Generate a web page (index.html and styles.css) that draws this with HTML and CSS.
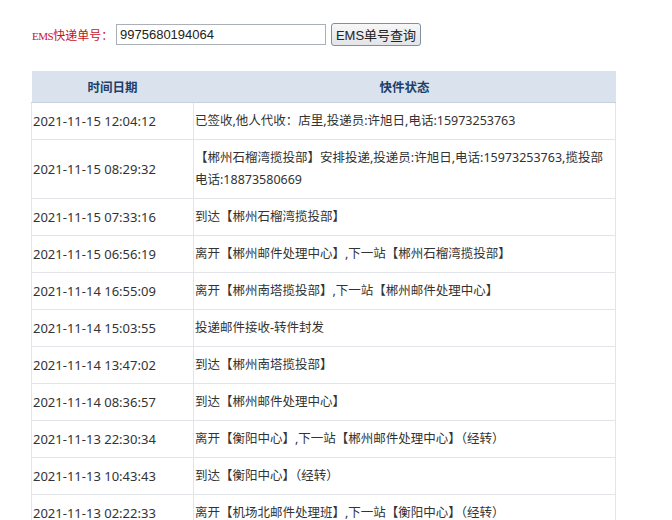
FILE: index.html
```html
<!DOCTYPE html>
<html lang="zh">
<head>
<meta charset="utf-8">
<link rel="stylesheet" href="styles.css">
</head>
<body>
<div class="page">
  <form class="search">
    <label class="label"><span class="ems">EMS</span>快递单号：</label>
    <input class="num" type="text" value="9975680194064">
    <button class="btn" type="button">EMS单号查询</button>
  </form>
  <table class="track">
    <thead>
      <tr><th class="c1">时间日期</th><th class="c2">快件状态</th></tr>
    </thead>
    <tbody>
      <tr><td class="t">2021-11-15 12:04:12</td><td class="s">已签收,他人代收：店里,投递员:许旭日,电话:15973253763</td></tr>
      <tr><td class="t">2021-11-15 08:29:32</td><td class="s">【郴州石榴湾揽投部】安排投递,投递员:许旭日,电话:15973253763,揽投部<br>电话:18873580669</td></tr>
      <tr><td class="t">2021-11-15 07:33:16</td><td class="s">到达【郴州石榴湾揽投部】</td></tr>
      <tr><td class="t">2021-11-15 06:56:19</td><td class="s">离开【郴州邮件处理中心】,下一站【郴州石榴湾揽投部】</td></tr>
      <tr><td class="t">2021-11-14 16:55:09</td><td class="s">离开【郴州南塔揽投部】,下一站【郴州邮件处理中心】</td></tr>
      <tr><td class="t">2021-11-14 15:03:55</td><td class="s">投递邮件接收-转件封发</td></tr>
      <tr><td class="t">2021-11-14 13:47:02</td><td class="s">到达【郴州南塔揽投部】</td></tr>
      <tr><td class="t">2021-11-14 08:36:57</td><td class="s">到达【郴州邮件处理中心】</td></tr>
      <tr><td class="t">2021-11-13 22:30:34</td><td class="s">离开【衡阳中心】,下一站【郴州邮件处理中心】（经转）</td></tr>
      <tr><td class="t">2021-11-13 10:43:43</td><td class="s">到达【衡阳中心】（经转）</td></tr>
      <tr><td class="t">2021-11-13 02:22:33</td><td class="s">离开【机场北邮件处理班】,下一站【衡阳中心】（经转）</td></tr>
    </tbody>
  </table>
</div>
</body>
</html>
```

FILE: styles.css
```css
html, body { margin: 0; padding: 0; background: #fff; }
body {
  font-family: "Noto Sans", "Noto Sans CJK SC", sans-serif;
  color: #333;
}
.page { padding: 23px 0 0 31px; }
.search {
  display: flex;
  align-items: center;
  height: 23px;
  margin: 0;
}
.label {
  color: #c8141e;
  font-size: 12px;
  width: 84px;
  padding-left: 1px;
}
.ems { font-family: "Liberation Serif", serif; font-size: 11px; letter-spacing: -0.5px; }
.num {
  box-sizing: border-box;
  width: 210px;
  height: 21px;
  border: 1px solid #a9b0b8;
  padding: 0 3px;
  font-family: "Liberation Sans", sans-serif;
  font-size: 13px;
  color: #222;
  margin: 0;
}
.btn {
  box-sizing: border-box;
  margin-left: 5px;
  width: 90px;
  height: 23px;
  border: 1px solid #7f8fa8;
  border-radius: 3px;
  background: linear-gradient(#f7f7f7, #e2e4e8);
  font-family: "Liberation Sans", "Noto Sans CJK SC", sans-serif;
  font-size: 13px;
  color: #222;
  padding: 0;
}
.track {
  margin-top: 25px;
  width: 585px;
  border-collapse: collapse;
}
.track th {
  background: #dae3ed;
  color: #1e3f6a;
  font-weight: bold;
  font-size: 12.5px;
  height: 31px;
  padding: 0;
  border-bottom: 1px solid #c6d2e0;
  text-align: center;
}
.track .c1 { width: 162px; }
.track td {
  border: 1px solid #e1e5ea;
  padding: 7px 2px 7px 1px;
  line-height: 22px;
  vertical-align: middle;
}
.track .t { font-size: 13px; }
.track .s { font-size: 12.5px; }
```
